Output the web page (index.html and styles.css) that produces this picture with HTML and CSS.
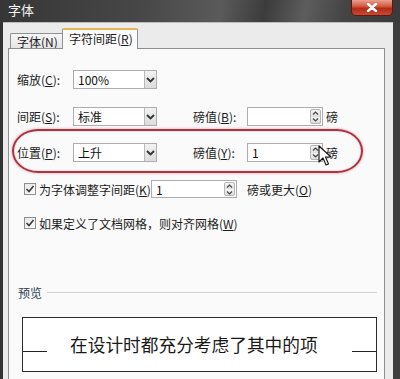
FILE: index.html
```html
<!DOCTYPE html>
<html lang="zh-CN">
<head>
<meta charset="utf-8">
<title>字体</title>
<link rel="stylesheet" href="styles.css">
</head>
<body>
<div class="window">
  <div class="titlebar">
    <span class="title">字体</span>
    <div class="close"><svg width="12" height="9" viewBox="0 0 12 9"><path d="M2 1 L10 8 M10 1 L2 8" stroke="#fff" stroke-width="2.4" stroke-linecap="round"/></svg></div>
  </div>
  <div class="frame">
    <div class="tabs">
      <div class="tab">字体(<u>N</u>)</div>
      <div class="tab active">字符间距(<u>R</u>)</div>
    </div>
    <div class="panel">
      <div class="row r1">
        <span class="lbl">缩放(<u>C</u>):</span>
        <div class="select"><span class="val">100%</span><span class="drop"><svg width="9" height="6" viewBox="0 0 9 6"><path d="M1 1 L4.5 4.5 L8 1" fill="none" stroke="#333" stroke-width="1.8"/></svg></span></div>
      </div>
      <div class="row r2">
        <span class="lbl">间距(<u>S</u>):</span>
        <div class="select"><span class="val">标准</span><span class="drop"><svg width="9" height="6" viewBox="0 0 9 6"><path d="M1 1 L4.5 4.5 L8 1" fill="none" stroke="#333" stroke-width="1.8"/></svg></span></div>
        <span class="lbl2">磅值(<u>B</u>):</span>
        <div class="input"><span class="val"></span><span class="spin"><svg width="9" height="15" viewBox="0 0 9 15"><path d="M2 5.5 L4.5 3 L7 5.5 M2 9.5 L4.5 12 L7 9.5" fill="none" stroke="#444" stroke-width="1.2"/></svg></span></div>
        <span class="unit">磅</span>
      </div>
      <div class="row r3">
        <span class="lbl">位置(<u>P</u>):</span>
        <div class="select"><span class="val">上升</span><span class="drop"><svg width="9" height="6" viewBox="0 0 9 6"><path d="M1 1 L4.5 4.5 L8 1" fill="none" stroke="#333" stroke-width="1.8"/></svg></span></div>
        <span class="lbl2">磅值(<u>Y</u>):</span>
        <div class="input"><span class="val">1</span><span class="spin"><svg width="9" height="15" viewBox="0 0 9 15"><path d="M2 5.5 L4.5 3 L7 5.5 M2 9.5 L4.5 12 L7 9.5" fill="none" stroke="#444" stroke-width="1.2"/></svg></span></div>
        <span class="unit">磅</span>
      </div>
      <div class="row cb1">
        <span class="check"><svg width="10" height="10" viewBox="0 0 10 10"><path d="M1.5 5 L4 7.5 L8.5 2" fill="none" stroke="#3a3a3a" stroke-width="1.6"/></svg></span>
        <span class="cbtext">为字体调整字间距(<u>K</u>):</span>
        <div class="input wide"><span class="val">1</span><span class="spin"><svg width="9" height="15" viewBox="0 0 9 15"><path d="M2 5.5 L4.5 3 L7 5.5 M2 9.5 L4.5 12 L7 9.5" fill="none" stroke="#444" stroke-width="1.2"/></svg></span></div>
        <span class="unit2">磅或更大(<u>O</u>)</span>
      </div>
      <div class="row cb2">
        <span class="check"><svg width="10" height="10" viewBox="0 0 10 10"><path d="M1.5 5 L4 7.5 L8.5 2" fill="none" stroke="#3a3a3a" stroke-width="1.6"/></svg></span>
        <span class="cbtext2">如果定义了文档网格，则对齐网格(<u>W</u>)</span>
      </div>
      <div class="legend"><span class="legend-text">预览</span><span class="legend-line"></span></div>
      <div class="preview">
        <span class="base-line"></span>
        <span class="sample">在设计时都充分考虑了其中的项</span>
        <span class="base-line"></span>
      </div>
    </div>
  </div>
  <div class="oval"></div>
  <svg class="cursor" width="14" height="22" viewBox="0 0 14 22"><path d="M1 1 L1 17 L5 13 L8 20 L10.5 19 L7.5 12 L13 12 Z" fill="#fff" stroke="#111" stroke-width="1.1" stroke-linejoin="round"/></svg>
</div>
</body>
</html>
```

FILE: styles.css
```css
html, body {
  margin: 0;
  padding: 0;
}
body {
  width: 400px;
  height: 379px;
  overflow: hidden;
  font-family: "Noto Sans CJK SC", "Noto Sans", sans-serif;
  font-size: 12px;
  color: #1c1c1c;
}
u {
  text-decoration: underline;
  text-underline-offset: 1px;
}
.window {
  position: relative;
  width: 400px;
  height: 379px;
  display: flex;
  flex-direction: column;
  background: linear-gradient(90deg, #343434 0%, #3e3e3e 100%);
}
.titlebar {
  height: 22px;
  flex: none;
  display: flex;
  align-items: center;
  justify-content: space-between;
  background: linear-gradient(100deg, #363636 0%, #474747 35%, #5a5a5a 55%, #3c3c3c 66%, #5d5d5d 76%, #444 86%, #3a3a3a 100%);
}
.title {
  margin-left: 8px;
  color: #f4f4f4;
  font-size: 13px;
  line-height: 16px;
  margin-top: -2px;
}
.close {
  width: 42px;
  height: 16px;
  margin-right: 7px;
  align-self: flex-start;
  border-radius: 0 0 5px 5px;
  border: 1px solid #5a1a14;
  border-top: none;
  box-sizing: border-box;
  background: linear-gradient(180deg, #e9a08e 0%, #d0533c 45%, #b32a17 55%, #c84a30 100%);
  display: flex;
  align-items: center;
  justify-content: center;
}
.frame {
  flex: 1;
  margin: 0 7px 0 3px;
  background: #ebebeb;
  padding: 6px 8px 0 5px;
  display: flex;
  flex-direction: column;
  border-top: 1px solid #bdbdbd;
}
.tabs {
  height: 19px;
  display: flex;
  align-items: flex-end;
  padding-left: 2px;
}
.tab {
  height: 15px;
  width: 52px;
  box-sizing: border-box;
  border: 1px solid #8d9092;
  border-bottom: none;
  border-right: none;
  background: linear-gradient(180deg, #f6f6f6 0%, #e6e6e6 100%);
  padding-left: 6px;
  font-size: 12px;
  line-height: 15px;
  border-radius: 2px 0 0 0;
}
.tab.active {
  position: relative;
  z-index: 1;
  height: 21px;
  width: 76px;
  margin-bottom: -1px;
  border: 1px solid #8d9092;
  border-bottom: none;
  border-top: 2px solid #e7b453;
  background: #fbfbfb;
  padding-left: 6px;
  line-height: 17px;
  border-radius: 2px 2px 0 0;
}
.panel {
  flex: 1;
  background: #fafafa;
  border: 1px solid #8d9092;
  border-bottom: none;
  padding-left: 8px;
  display: flex;
  flex-direction: column;
}
.row {
  display: flex;
  align-items: center;
  height: 19px;
  flex: none;
}
.r1 { margin-top: 21px; }
.r2 { margin-top: 18px; }
.r3 { margin-top: 17px; }
.cb1 { margin-top: 18px; height: 18px; }
.cb2 { margin-top: 16px; height: 18px; }
.lbl {
  width: 56px;
  flex: none;
  white-space: nowrap;
}
.lbl2 {
  width: 54px;
  margin-left: 36px;
  flex: none;
  white-space: nowrap;
}
.select, .input {
  height: 19px;
  box-sizing: border-box;
  border: 1px solid #abadb3;
  background: #fff;
  display: flex;
  align-items: stretch;
  flex: none;
}
.select { width: 84px; }
.input { width: 76px; }
.input.wide { width: 86px; height: 18px; }
.val {
  flex: 1;
  padding-left: 4px;
  line-height: 17px;
  font-size: 12px;
  color: #111;
}
.drop {
  width: 11px;
  margin: 0;
  border-left: 1px solid #b9b9b9;
  background: linear-gradient(180deg, #f2f2f2 0%, #dcdcdc 100%);
  display: flex;
  align-items: center;
  justify-content: center;
}
.spin {
  width: 11px;
  margin: 1px 1px 1px 0;
  border: 1px solid #b5b5b5;
  border-radius: 2px;
  background: linear-gradient(180deg, #f4f4f4 0%, #e0e0e0 50%, #f4f4f4 51%, #dedede 100%);
  display: flex;
  align-items: center;
  justify-content: center;
  box-sizing: border-box;
}
.unit {
  margin-left: 3px;
  flex: none;
}
.check {
  width: 12px;
  height: 12px;
  margin-left: 7px;
  box-sizing: border-box;
  border: 1px solid #8e8f8f;
  background: linear-gradient(135deg, #e6e6e6 0%, #fdfdfd 100%);
  display: flex;
  align-items: center;
  justify-content: center;
  flex: none;
}
.cbtext {
  width: 112px;
  margin-left: 3px;
  white-space: nowrap;
  flex: none;
}
.cbtext2 {
  margin-left: 3px;
  white-space: nowrap;
}
.unit2 {
  margin-left: 10px;
  white-space: nowrap;
}
.legend {
  margin-top: 54px;
  height: 14px;
  display: flex;
  align-items: center;
  flex: none;
}
.legend-text {
  margin-left: 1px;
  color: #2f4050;
  font-size: 12px;
  line-height: 14px;
}
.legend-line {
  width: 330px;
  margin-left: 5px;
  height: 1px;
  background: #cfcfcf;
  border-bottom: 1px solid #ffffff;
}
.preview {
  margin: 17px 7px 0 5px;
  height: 55px;
  box-sizing: border-box;
  border: 1px solid #2a2a2a;
  background: #ffffff;
  display: flex;
  align-items: center;
  flex: none;
}
.base-line {
  width: 24px;
  height: 1px;
  background: #222;
  align-self: flex-end;
  margin-bottom: 19px;
  flex: none;
}
.sample {
  flex: 1;
  padding-left: 23px;
  font-size: 17.7px;
  line-height: 20px;
  color: #1a1a1a;
  white-space: nowrap;
  margin-top: -2px;
}
.oval {
  position: absolute;
  left: 12px;
  top: 129px;
  width: 351px;
  height: 44px;
  box-sizing: border-box;
  border: 2px solid #a93442;
  border-radius: 26px / 22px;
  box-shadow: 0 0 3px rgba(210, 110, 120, 0.7), inset 0 0 2px rgba(210, 110, 120, 0.5);
}
.cursor {
  position: absolute;
  left: 318px;
  top: 145px;
}
```
